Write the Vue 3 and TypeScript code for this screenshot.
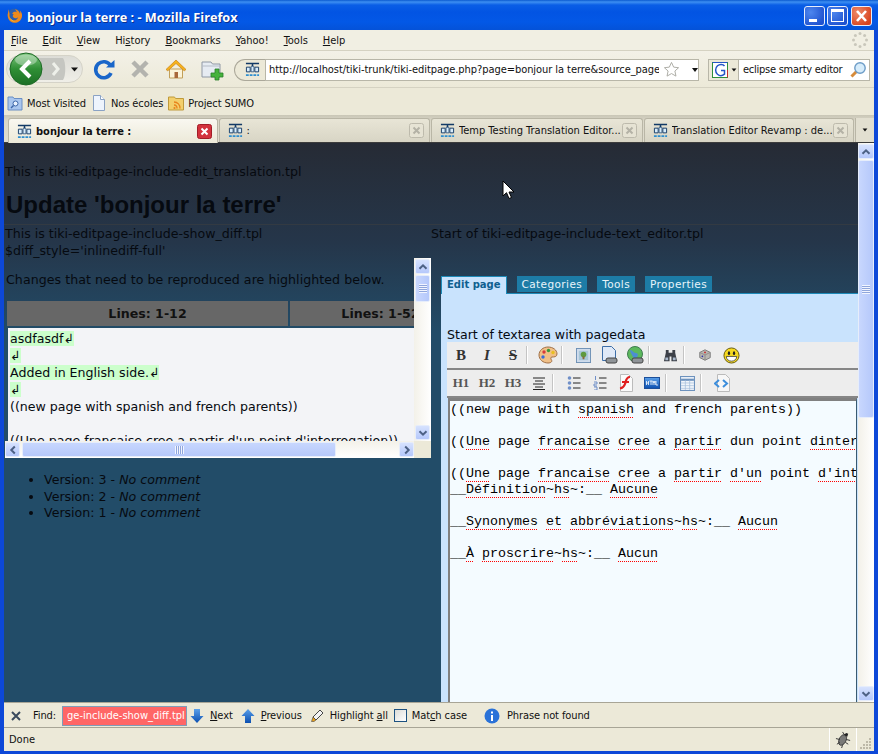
<script setup lang="ts">
const menu: [string, string, string][] = [
  ['', 'F', 'ile'], ['', 'E', 'dit'], ['', 'V', 'iew'], ['Hi', 's', 'tory'],
  ['', 'B', 'ookmarks'], ['', 'Y', 'ahoo!'], ['', 'T', 'ools'], ['', 'H', 'elp'],
]
const tabs = [
  { t: 'bonjour la terre :', on: true },
  { t: ':', on: false },
  { t: 'Temp Testing Translation Editor...', on: false },
  { t: 'Translation Editor Revamp : de...', on: false },
]
const diff = [
  { t: 'asdfasdf↲', add: true },
  { t: '↲', add: true },
  { t: 'Added in English side.↲', add: true },
  { t: '↲', add: true },
  { t: '((new page with spanish and french parents))', add: false },
  { t: '\u00a0', add: false },
  { t: "((Une page francaise cree a partir d'un point d'interrogation))", add: false },
]
const versions = ['3', '2', '1']
</script>

<template>
  <div class="win">
    <svg class="defs" aria-hidden="true">
      <defs>
        <linearGradient id="gg" x1="0" y1="0" x2="0" y2="1"><stop offset="0" stop-color="#7fc77f"/><stop offset=".5" stop-color="#2f8f35"/><stop offset="1" stop-color="#1c6f25"/></linearGradient>
        <linearGradient id="cap" x1="0" y1="0" x2="0" y2="1"><stop offset="0" stop-color="#dcdcd6"/><stop offset="1" stop-color="#f0efe8"/></linearGradient>
        <linearGradient id="bl" x1="0" y1="0" x2="0" y2="1"><stop offset="0" stop-color="#5aa0ea"/><stop offset="1" stop-color="#0b4fb0"/></linearGradient>
      </defs>
      <symbol id="tiki" viewBox="0 0 16 16">
        <path d="M1 1.500h14M8 1.500v9" stroke="#123a66" stroke-width="1.600" fill="none"/>
        <path d="M1.500 5.500h4v5h-4zM10.500 5.500h4v5h-4z" stroke="#123a66" fill="#d8ecfa"/>
        <path d="M6.500 4.500h3v6h-3z" fill="#d8ecfa" stroke="#123a66" stroke-width=".7"/>
        <path d="M1 13h3v2H1zM5 13h3v2H5zM9 13h3v2H9zM13 13h2v2h-2z" fill="#2e8fd0"/>
      </symbol>
      <symbol id="tx" viewBox="0 0 15 15">
        <rect x=".5" y=".5" width="14" height="14" rx="2" fill="#e6e3d4" stroke="#bdbaac"/>
        <path d="M4.500 4.500l6 6M10.500 4.500l-6 6" stroke="#b4b2a6" stroke-width="2"/>
      </symbol>
      <symbol id="ch" viewBox="0 0 10 10">
        <path d="M1.500 6.800L5 3.300l3.500 3.500" fill="none" stroke="#4d6185" stroke-width="2"/>
      </symbol>
    </svg>

    <header class="title">
      <svg class="ff" viewBox="0 0 18 18" width="17" height="17">
        <circle cx="9" cy="9" r="7.500" fill="#2b5fb0"/>
        <path d="M3 2.500c-.6 1.500-.5 2.500-.8 3.500C.8 10 3 16.500 9 16.800c4.500.2 8-3.500 8-7.800 0-2-.8-4-2.200-5.200.5 1.500.4 2.600 0 3.400C14 4.700 12 3 9.500 2.500c1 1 1.800 2 1.800 3-1-.6-2.500-.6-3.500 0-.9.600-1.400 1.500-1.200 1.800.8-.3 1.200.2 1.400.7-1 .9-1.200 2 0 3.200 1.300 1.200 4 .9 5-1-.5 2.700-3 4.300-5.500 3.800C4.500 13.300 3.200 10 3.800 7.500 3.400 6 3 4 3 2.500z" fill="#ee8a1c"/>
        <path d="M4 11c1 3 3.500 4.800 6.500 4.500C7.500 14.800 5.500 13.500 4 11z" fill="#f8cf3a"/>
      </svg>
      <span class="ttext">bonjour la terre : - Mozilla Firefox</span>
      <div class="wbtns">
        <div class="wb"><i class="imin"></i></div>
        <div class="wb"><i class="imax"></i></div>
        <div class="wb close">
          <svg viewBox="0 0 21 20" width="21" height="20"><path d="M6 5l9 10M15 5L6 15" stroke="#fff" stroke-width="2.600"/></svg>
        </div>
      </div>
    </header>

    <div class="chrome">
      <nav class="menu">
        <span v-for="m in menu" :key="m[1]" class="mi">{{ m[0] }}<u>{{ m[1] }}</u>{{ m[2] }}</span>
        <svg class="throb" viewBox="0 0 16 16" width="16" height="16">
          <g fill="#c9c7bb"><circle cx="8" cy="1.500" r="1.500"/><circle cx="12.600" cy="3.400" r="1.500"/><circle cx="14.500" cy="8" r="1.500"/><circle cx="12.600" cy="12.600" r="1.500"/><circle cx="8" cy="14.500" r="1.500"/><circle cx="3.400" cy="12.600" r="1.500"/><circle cx="1.500" cy="8" r="1.500"/><circle cx="3.400" cy="3.400" r="1.500"/></g>
        </svg>
      </nav>

      <div class="nav">
        <svg class="backfw" viewBox="0 0 78 34" width="78" height="34">
          <rect x=".5" y="3.500" width="76" height="27" rx="13.500" fill="url(#cap)" stroke="#d5d3c8"/>
          <path d="M30 6h27c3 4 3 18 0 22H30z" fill="#c5c6c1"/>
          <path d="M47 11l5 6-5 6" fill="none" stroke="#eef0ea" stroke-width="3"/>
          <path d="M65 15.500h7l-3.500 4z" fill="#111"/>
          <circle cx="20" cy="17" r="16" fill="url(#gg)" stroke="#1d6a25"/>
          <ellipse cx="20" cy="8" rx="11" ry="5.500" fill="#fff" opacity=".35"/>
          <path d="M24 9l-8 8 8 8" fill="none" stroke="#fff" stroke-width="4"/>
        </svg>
        <div class="nb"><svg viewBox="0 0 24 24" width="24" height="24"><path d="M18.500 8.500A8 8 0 1 0 19 16" fill="none" stroke="#1a66c9" stroke-width="3.600"/><path d="M14 10.500h8.500V3z" fill="#1a66c9"/></svg></div>
        <div class="nb"><svg viewBox="0 0 24 24" width="24" height="24"><path d="M5 5l14 14M19 5L5 19" stroke="#b3b3ae" stroke-width="4.500"/></svg></div>
        <div class="nb"><svg viewBox="0 0 24 24" width="24" height="24"><path d="M5.500 12v9h13v-9z" fill="#fbf3d8" stroke="#c2a05a"/><path d="M10.500 15h3.500v6h-3.500z" fill="#a9683a"/><path d="M2 12.500L12 3l10 9.500-1.800 1.300L12 6.500 3.800 13.800z" fill="#f6b21b" stroke="#c8831a" stroke-width=".7"/></svg></div>
        <div class="nb"><svg viewBox="0 0 24 24" width="24" height="24"><path d="M2 5h9l1.500 2H20v13H2z" fill="#e6ebf2" stroke="#8f98a4"/><path d="M2 9h18" stroke="#b5bcc6"/><path d="M15 12h4v4h4v4h-4v3h-4v-3h-4v-4h4z" fill="#46b23d" stroke="#2a7f28" stroke-width=".8"/></svg></div>

        <div class="url">
          <div class="ucap"><svg width="15" height="15"><use href="#tiki"/></svg></div>
          <div class="uin">
            <span class="utext">http://localhost/tiki-trunk/tiki-editpage.php?page=bonjour la terre&amp;source_page=</span>
            <svg viewBox="0 0 18 18" width="17" height="17"><path d="M9 1.500l2.300 5 5.200.6-3.900 3.500 1.100 5.400L9 13.300 4.300 16l1.100-5.400L1.500 7.100l5.200-.6z" fill="#fff" stroke="#a9a9a2"/></svg>
            <i class="tri urlt"></i>
          </div>
        </div>

        <div class="search">
          <div class="scap">
            <svg viewBox="0 0 16 16" width="16" height="16"><rect x=".5" y=".5" width="15" height="15" fill="#fff" stroke="#2f8f3a"/><path d="M.5.500h15" stroke="#2456c8"/><path d="M15.500 8v7.500" stroke="#c43030"/><path d="M12.500 4C11 2 7.500 2 5.500 3.800 3 6 3 10 5.500 12.300c2 1.700 5 1.500 7-.2V8.500H9" fill="none" stroke="#2456c8" stroke-width="1.500"/></svg>
            <i class="tri smt"></i>
          </div>
          <span class="stext">eclipse smarty editor</span>
          <svg class="smag" viewBox="0 0 18 18" width="18" height="18"><path d="M7.500 10.500l-5 5" stroke="#d68b3a" stroke-width="3"/><circle cx="11" cy="7" r="5.200" fill="#d6ecfb" stroke="#6c9cc7" stroke-width="1.400"/></svg>
        </div>
      </div>

      <div class="bm">
        <span class="bi">
          <svg viewBox="0 0 16 16" width="16" height="16"><path d="M1 2h5l1 1.500h8V15H1z" fill="#a9c6ee" stroke="#6a8fc4"/><circle cx="8.500" cy="8.500" r="2.500" fill="#e9f3ff" stroke="#3c66a8"/><path d="M6.500 10.500L4 13" stroke="#3c66a8" stroke-width="1.500"/></svg>Most Visited
        </span>
        <span class="bi">
          <svg viewBox="0 0 16 16" width="16" height="16"><path d="M2.500.500h7l4 4v11h-11z" fill="#eef4fd" stroke="#8aa2c4"/><path d="M9.500.500v4h4" fill="#fff" stroke="#8aa2c4"/></svg>Nos écoles
        </span>
        <span class="bi">
          <svg viewBox="0 0 16 16" width="16" height="16"><path d="M.5 2h6l1 1.500h8V15H.500z" fill="#f3cf6b" stroke="#bf9a3a"/><g fill="none" stroke="#e8841c" stroke-width="1.300"><path d="M6 7a6 6 0 0 1 6 6.500M6 10a3 3 0 0 1 3 3.500"/></g><circle cx="6.500" cy="13" r="1.100" fill="#e8841c"/></svg>Project SUMO
        </span>
      </div>

      <div class="tabs">
        <div v-for="(t, i) in tabs" :key="i" class="tab" :class="[{ on: t.on }, 'tw' + i]">
          <svg class="tico" width="15" height="15"><use href="#tiki"/></svg>
          <span class="tt">{{ t.t }}</span>
          <svg v-if="t.on" viewBox="0 0 15 15" width="15" height="15"><rect x=".5" y=".5" width="14" height="14" rx="2" fill="#d3323d" stroke="#a21d28"/><path d="M4.500 4.500l6 6M10.500 4.500l-6 6" stroke="#fff" stroke-width="2"/></svg>
          <svg v-else width="15" height="15"><use href="#tx"/></svg>
        </div>
        <div class="tabmore"><i class="tri"></i></div>
      </div>

      <div class="content">
        <main class="page">
          <p class="l1">This is tiki-editpage-include-edit_translation.tpl</p>
          <h1 class="h1">Update 'bonjour la terre'</h1>
          <div class="cols">
            <section class="left">
              <p class="ltop">This is tiki-editpage-include-show_diff.tpl</p>
              <p class="ltop2">$diff_style='inlinediff-full'</p>
              <div class="sbox">
                <div class="view">
                  <p class="chg">Changes that need to be reproduced are highlighted below.</p>
                  <div class="dhead"><div class="dh a">Lines: 1-12</div><div class="dh b">Lines: 1-52</div></div>
                  <div class="dbody">
                    <div v-for="(d, i) in diff" :key="i" class="dline"><span :class="{ add: d.add }">{{ d.t }}</span></div>
                  </div>
                </div>
                <div class="vbar small">
                  <div class="sb"><svg width="10" height="10"><use href="#ch"/></svg></div>
                  <div class="thumb tv"><i class="grip"></i></div>
                  <div class="track"></div>
                  <div class="sb"><svg class="flip" width="10" height="10"><use href="#ch"/></svg></div>
                </div>
                <div class="hbar">
                  <div class="sb"><svg class="rl" width="10" height="10"><use href="#ch"/></svg></div>
                  <div class="thumb th"><i class="griph"></i></div>
                  <div class="track"></div>
                  <div class="sb"><svg class="rr" width="10" height="10"><use href="#ch"/></svg></div>
                </div>
                <div class="corner"></div>
              </div>
              <ul class="vers">
                <li v-for="v in versions" :key="v">Version: {{ v }} - <em>No comment</em></li>
              </ul>
            </section>

            <section class="right">
              <p class="rtop">Start of tiki-editpage-include-text_editor.tpl</p>
              <div class="etabs">
                <span class="et on">Edit page</span>
                <span class="et">Categories</span>
                <span class="et">Tools</span>
                <span class="et">Properties</span>
              </div>
              <div class="panel">
                <p class="sta">Start of textarea with pagedata</p>
                <div class="bar bar1">
                  <span class="tb fx">B</span>
                  <span class="tb fx it">I</span>
                  <span class="tb fx st">S</span>
                  <i class="sep"></i>
                  <span class="tb"><svg viewBox="0 0 20 20" width="20" height="20"><path d="M10 2c5 0 9 3 9 7 0 3-3 3-5 3-1.500 0-1.500 2-.5 3 1 1.500-.5 3-3.500 3C5 18 1 14.500 1 10s4-8 9-8z" fill="#f0c088" stroke="#a07048"/><circle cx="6" cy="7" r="1.700" fill="#d83a3a"/><circle cx="10.500" cy="5.500" r="1.700" fill="#3a9a3a"/><circle cx="15" cy="7.500" r="1.700" fill="#e8c020"/><circle cx="5" cy="12" r="1.700" fill="#3a6ad8"/></svg></span>
                  <i class="sep"></i>
                  <span class="tb"><svg viewBox="0 0 16 16" width="15" height="15"><rect x=".5" y=".5" width="15" height="15" fill="#cfdcec" stroke="#6d8fb5"/><rect x="3" y="3" width="10" height="10" fill="#a7c6d8"/><circle cx="8" cy="7" r="3" fill="#5e9a3e"/><path d="M7 9h2v3H7z" fill="#8a6a3a"/></svg></span>
                  <span class="tb"><svg viewBox="0 0 18 18" width="18" height="18"><path d="M2.500.500h9l4 4v10h-13z" fill="#dfe9f7" stroke="#3d6ea8"/><rect x="6" y="12" width="11" height="5" rx="2" fill="#8f9498" stroke="#444"/></svg></span>
                  <span class="tb"><svg viewBox="0 0 18 18" width="18" height="18"><circle cx="9" cy="8" r="7.500" fill="#5cb85c" stroke="#3f7d4f"/><path d="M4 4c3 0 3 3 6 3s2 4 0 5-3-1-4-3-2-3-2-5z" fill="#4c8ed0"/><rect x="6" y="12" width="11" height="5" rx="2" fill="#8f9498" stroke="#444"/></svg></span>
                  <i class="sep"></i>
                  <span class="tb"><svg viewBox="0 0 16 16" width="15" height="15"><path d="M3 2h3v3h4V2h3v3l2 9H9V9H7v5H1l2-9z" fill="#3c4048"/><path d="M2.500 10h3v3h-3zM10.500 10h3v3h-3z" fill="#a9b8cc"/></svg></span>
                  <i class="sep"></i>
                  <span class="tb"><svg viewBox="0 0 16 16" width="14" height="14"><path d="M8 2l6 3v6l-6 3-6-3V5z" fill="#b9b7b2" stroke="#777"/><path d="M2 5l6 3 6-3M8 8v6" stroke="#8b8985" fill="none"/><circle cx="8" cy="5" r="1" fill="#c22"/><circle cx="5" cy="9.500" r="1" fill="#33a"/></svg></span>
                  <span class="tb"><svg viewBox="0 0 18 18" width="17" height="17"><circle cx="9" cy="9" r="8" fill="#f5d91e" stroke="#63560a"/><ellipse cx="6.300" cy="6.500" rx="1.200" ry="2" fill="#222"/><ellipse cx="11.700" cy="6.500" rx="1.200" ry="2" fill="#222"/><path d="M3.500 10h11c0 3-2.500 5-5.500 5s-5.500-2-5.500-5z" fill="#fff" stroke="#333" stroke-width=".8"/></svg></span>
                </div>
                <div class="bar bar2">
                  <span class="tb fx hh">H1</span>
                  <span class="tb fx hh">H2</span>
                  <span class="tb fx hh">H3</span>
                  <span class="tb"><svg viewBox="0 0 14 14" width="14" height="14"><path d="M1 2h12M3 5h8M1 8h12M3 11h8M1 13.500h12" stroke="#222" stroke-width="1"/></svg></span>
                  <i class="sep"></i>
                  <span class="tb"><svg viewBox="0 0 14 14" width="14" height="14"><path d="M6 2h7.500M6 7h7.500M6 12h7.500" stroke="#222"/><g fill="#6f8fc8"><circle cx="2.500" cy="2" r="1.800"/><circle cx="2.500" cy="7" r="1.800"/><circle cx="2.500" cy="12" r="1.800"/></g></svg></span>
                  <span class="tb"><svg viewBox="0 0 14 14" width="14" height="14"><path d="M6 2h7.500M6 7h7.500M6 12h7.500" stroke="#222"/><path d="M2.500 0v4M1 6h3v2H1v2h3M1 11h3v3H1" stroke="#6f8fc8" fill="none"/></svg></span>
                  <span class="tb"><svg viewBox="0 0 16 18" width="16" height="18"><path d="M2.500.500h8l4 4v13h-12z" fill="#fafafa" stroke="#bbb"/><path d="M12 3C8 3 8 7 7 10s-2 4-5 4.500M4 8h7" fill="none" stroke="#e02020" stroke-width="2.200"/></svg></span>
                  <span class="tb"><svg viewBox="0 0 16 12" width="16" height="12"><rect x=".5" y=".5" width="15" height="11" fill="url(#bl)" stroke="#1c4f9a"/><path d="M2.500 4v4M4.500 4v4M2.500 6h2M5.500 4h3M7 4v4M9 8V4l1 2 1-2v4M12 4v4h2" stroke="#fff" fill="none" stroke-width=".8"/></svg></span>
                  <i class="sep"></i>
                  <span class="tb"><svg viewBox="0 0 14 14" width="15" height="15"><rect x=".5" y=".5" width="13" height="13" fill="#f2f6fb" stroke="#6d92bd"/><path d="M1 3.500h12" stroke="#6d92bd" stroke-width="2"/><path d="M1 6.500h12M1 9h12M1 11.500h12M5 4v9M9 4v9" stroke="#a6bfdb" stroke-width=".7"/></svg></span>
                  <i class="sep"></i>
                  <span class="tb"><svg viewBox="0 0 16 18" width="16" height="18"><path d="M3.500.500h8l4 4v13h-12z" fill="#f7f7f7" stroke="#bbb"/><path d="M5 6L1 9.500 5 13M9 6l4 3.500L9 13" fill="none" stroke="#3d8edc" stroke-width="2"/></svg></span>
                </div>
                <div class="ta">
                  <div class="ln">((new page with <span class="sp">spanish</span> and french parents))</div>
                  <div class="ln"></div>
                  <div class="ln">((<span class="sp">Une</span> page <span class="sp">francaise</span> <span class="sp">cree</span> a <span class="sp">partir</span> dun point <span class="sp">dinterrogation</span>))</div>
                  <div class="ln"></div>
                  <div class="ln">((<span class="sp">Une</span> page <span class="sp">francaise</span> <span class="sp">cree</span> a <span class="sp">partir</span> <span class="sp">d'un</span> point <span class="sp">d'interrogation</span>))</div>
                  <div class="ln">__<span class="sp">Définition</span>~<span class="sp">hs</span>~:__ <span class="sp">Aucune</span></div>
                  <div class="ln"></div>
                  <div class="ln">__<span class="sp">Synonymes</span> <span class="sp">et</span> <span class="sp">abbréviations</span>~<span class="sp">hs</span>~:__ <span class="sp">Aucun</span></div>
                  <div class="ln"></div>
                  <div class="ln">__<span class="sp">À</span> <span class="sp">proscrire</span>~<span class="sp">hs</span>~:__ <span class="sp">Aucun</span></div>
                </div>
              </div>
            </section>
          </div>
          <svg class="cursor" viewBox="0 0 13 20" width="13" height="20"><path d="M1 1v15l3.500-3.300L7 18.500l2.500-1-2.500-5.500h5z" fill="#fff" stroke="#000"/></svg>
        </main>
        <div class="vbar big">
          <div class="sb"><svg width="10" height="10"><use href="#ch"/></svg></div>
          <div class="thumb tb2"><i class="grip"></i></div>
          <div class="track"></div>
          <div class="sb"><svg class="flip" width="10" height="10"><use href="#ch"/></svg></div>
        </div>
      </div>

      <div class="find">
        <svg class="fx-x" viewBox="0 0 10 10" width="10" height="10"><path d="M1 1l8 8M9 1L1 9" stroke="#3a4a5c" stroke-width="2"/></svg>
        <span class="flabel">Find:</span>
        <div class="finput">ge-include-show_diff.tpl</div>
        <span class="fi"><svg viewBox="0 0 14 16" width="14" height="16"><path d="M4 1h6v7h3.500L7 15 .5 8H4z" fill="url(#bl)"/></svg><span><u>N</u>ext</span></span>
        <span class="fi"><svg viewBox="0 0 14 16" width="14" height="16"><path d="M4 15h6V8h3.500L7 1 .5 8H4z" fill="url(#bl)"/></svg><span><u>P</u>revious</span></span>
        <span class="fi"><svg viewBox="0 0 14 14" width="14" height="14"><path d="M10 1l3 3-7 7-3-3z" fill="#f3f3f3" stroke="#444"/><path d="M3 8l3 3-2 1.500H1.500z" fill="#e8a01c" stroke="#444" stroke-width=".6"/></svg><span>Highlight <u>a</u>ll</span></span>
        <span class="fc"><i class="cb"></i><span>Mat<u>c</u>h case</span></span>
        <span class="fp"><svg viewBox="0 0 16 16" width="16" height="16"><circle cx="8" cy="8" r="7.500" fill="#2a72d8"/><path d="M7 3.500h2v2H7zM7 7h2v6H7z" fill="#fff"/></svg><span>Phrase not found</span></span>
      </div>

      <footer class="status">
        <span>Done</span>
        <div class="sright">
          <div class="bug"><svg viewBox="0 0 18 18" width="17" height="17"><path d="M6 6c2-3 5-2 6 0s-1 8-5 9-4-6-1-9z" fill="#7a7a78" stroke="#333"/><path d="M9 4l3-2 2 1-1 3z" fill="#222"/><path d="M5 9L1 8M5 12l-3 2M8 15l-1 3M12 9l4 1M11 12l3 2M10 4L8 1" stroke="#333"/></svg></div>
          <svg class="gripc" viewBox="0 0 12 12" width="12" height="12"><g fill="#bdb9a8"><rect x="9" y="1" width="2" height="2"/><rect x="6" y="4" width="2" height="2"/><rect x="9" y="4" width="2" height="2"/><rect x="3" y="7" width="2" height="2"/><rect x="6" y="7" width="2" height="2"/><rect x="9" y="7" width="2" height="2"/><rect x="0" y="10" width="2" height="2"/><rect x="3" y="10" width="2" height="2"/><rect x="6" y="10" width="2" height="2"/><rect x="9" y="10" width="2" height="2"/></g></svg>
        </div>
      </footer>
    </div>
  </div>
</template>

<style>
html, body { margin: 0; padding: 0; overflow: hidden; background: #0a3fd0; }
</style>

<style scoped>
p, h1, ul { margin: 0; padding: 0; }
.defs { width: 0; height: 0; display: block; overflow: hidden; }
.win {
  width: 878px; height: 754px; display: flex; flex-direction: column; overflow: hidden;
  background: #0d48d8; font-family: "DejaVu Sans Condensed", "DejaVu Sans", sans-serif; font-stretch: condensed; font-size: 11px; color: #111;
  position: relative;
}
.title {
  height: 30px; flex: none; display: flex; align-items: center; padding: 0 6px; box-sizing: border-box;
  background: linear-gradient(#0b5ad0 0, #3d8ff2 2px, #0a5ee6 5px, #0254e3 12px, #0358e6 22px, #0452d8 30px);
}
.ff { margin-top: 1px; }
.ttext { margin-left: 4px; margin-top: 3px; color: #fff; font-weight: 700; font-stretch: normal; font-size: 12.7px; font-family: "Open Sans", sans-serif; text-shadow: 1px 1px 0 #0a2f90; }
.wbtns { margin-left: auto; display: flex; gap: 2px; margin-top: 2px; }
.wb {
  width: 21px; height: 20px; box-sizing: border-box; border: 1px solid #e6edfb; border-radius: 3px;
  background: radial-gradient(circle at 30% 30%, #4d86ee, #1f52cf 80%); position: relative; overflow: hidden;
}
.wb.close { background: radial-gradient(circle at 30% 30%, #ee8a68, #d8431e 80%); margin-left: 1px; }
.wb.close svg { margin: -1px; display: block; }
.imin { position: absolute; left: 4px; bottom: 3px; width: 8px; height: 3px; background: #fff; }
.imax { position: absolute; left: 3px; top: 2px; width: 13px; height: 13px; box-sizing: border-box; border: 1px solid #fff; border-top-width: 3px; }
.chrome { flex: 1; min-height: 0; margin: 0 4px 3px; display: flex; flex-direction: column; background: #ece9d8; }
.menu { height: 21px; flex: none; display: flex; align-items: center; padding-left: 7px; gap: 15px; border-bottom: 1px solid #d5d2c2; box-sizing: border-box; background: #f1efe3; }
.mi { white-space: nowrap; }
.throb { margin-left: auto; margin-right: 6px; }
.nav { height: 37px; flex: none; display: flex; align-items: center; padding-left: 2px; border-bottom: 1px solid #d5d2c2; background: linear-gradient(#f3f1e7, #ece9d8); box-sizing: border-box; }
.nb { width: 36px; height: 24px; display: flex; justify-content: center; flex: none; }
.nb:first-of-type { margin-left: 2px; }
.url { margin: 1px 0 0 4px; width: 465px; height: 22px; display: flex; flex: none; }
.ucap { width: 31px; box-sizing: border-box; border: 1px solid #aba89a; border-right: none; border-radius: 11px 0 0 11px; background: #ece9d8; display: flex; align-items: center; justify-content: center; padding-left: 5px; }
.uin { flex: 1; min-width: 0; background: #fff; border: 1px solid #b8b6a8; display: flex; align-items: center; padding-left: 3px; box-sizing: border-box; }
.utext { width: 390px; overflow: hidden; white-space: nowrap; flex: none; margin-right: 4px; letter-spacing: -.06px; }
.tri { display: inline-block; width: 0; height: 0; border: 3.5px solid transparent; border-top: 4px solid #111; border-bottom: none; }
.urlt { margin-left: 12px; }
.search { margin: 1px 0 0 9px; width: 162px; height: 22px; display: flex; align-items: center; background: #fff; border: 1px solid #b8b6a8; box-sizing: border-box; flex: none; }
.scap { width: 30px; height: 100%; display: flex; align-items: center; gap: 3px; padding-left: 3px; box-sizing: border-box; background: #ece9d8; border-right: 1px solid #b8b6a8; flex: none; }
.smt { transform: scale(.8); }
.stext { margin-left: 4px; flex: 1; white-space: nowrap; letter-spacing: -.25px; }
.smag { margin-right: 2px; }
.bm { height: 27px; flex: none; display: flex; align-items: center; padding: 3px 0 0 3px; gap: 5px; background: #ece9d8; box-sizing: border-box; }
.bi { display: flex; align-items: center; gap: 4px; white-space: nowrap; letter-spacing: -.1px; }
.tabs { height: 28px; flex: none; box-sizing: border-box; display: flex; align-items: flex-start; gap: 1px; padding: 3px 0 0 4px; background: linear-gradient(#c9c6b6 0, #dad7c8 6px, #e0ddcf 100%); border-bottom: 1px solid #3c3c3c; }
.tab { height: 24px; box-sizing: border-box; display: flex; align-items: center; padding: 0 5px 0 8px; background: linear-gradient(#e8e5d6, #d8d5c5); border: 1px solid #b9b6a6; border-bottom: none; border-radius: 3px 3px 0 0; }
.tab.on { height: 25px; background: linear-gradient(#f9f8f1, #ece9d8); font-weight: 700; }
.tw0 { width: 210px; } .tw1 { width: 212px; } .tw2 { width: 212px; } .tw3 { width: 211px; }
.tico { flex: none; margin-right: 4px; }
.tt { flex: 1; white-space: nowrap; overflow: hidden; }
.tabmore { width: 18px; height: 24px; display: flex; align-items: center; justify-content: center; border-left: 1px solid #b9b6a6; background: #e2dfd0; }
.tabmore .tri { transform: scale(.8); }
.content { flex: none; height: 559px; display: flex; min-height: 0; }
.page {
  width: 854px; flex: none; overflow: hidden; position: relative;
  background: linear-gradient(#262b35 0, #25364a 100px, #224c68 190px, #224c68 100%);
  font-family: "DejaVu Sans", sans-serif; font-stretch: normal; font-size: 12.6px; color: #060a10;
}
.l1 { padding: 21px 0 0 1px; line-height: 16px; }
.h1 { font-family: "Liberation Sans", sans-serif; font-size: 24px; font-weight: 700; line-height: 28px; margin-top: 11px; padding: 0 0 5px 2px; border-bottom: 1px solid #333a42; }
.cols { display: grid; grid-template-columns: 427px 427px; }
.ltop { padding-left: 1px; line-height: 16px; margin-top: 1px; }
.ltop2 { padding-left: 1px; line-height: 15px; margin-top: 1px; }
.sbox { margin: 0 0 0 1px; width: 426px; height: 200px; display: grid; grid-template: 183px 17px / 409px 17px; }
.view { overflow: hidden; white-space: nowrap; padding-left: 2px; box-sizing: border-box; }
.chg { padding: 14px 0 0 0; line-height: 16px; margin-left: -1px; letter-spacing: .05px; }
.dhead { display: flex; gap: 2px; margin-top: 13px; height: 25px; }
.dh { background: #676767; font-weight: 700; text-align: center; line-height: 25px; color: #111; flex: none; }
.dh.a { width: 281px; } .dh.b { width: 181px; }
.dbody { margin: 2px 0 0 1px; background: #f3f4f7; padding: 2px 0 0 2px; height: 120px; box-sizing: border-box; }
.dline { line-height: 17px; height: 17px; }
.add { background: #ccffcc; }
.vers { list-style: disc; padding-left: 40px; margin-top: 14px; line-height: 16.5px; }
.rtop { line-height: 16px; margin-top: 1px; }
.etabs { margin: 34px 0 0 10px; height: 17px; display: flex; align-items: flex-start; gap: 10px; font-size: 10.5px; letter-spacing: .4px; }
.et { height: 16px; line-height: 16px; padding: 0 5px; background: #1d7ca6; color: #e8f4fa; }
.et.on { background: #c9e3fd; color: #0f6090; font-weight: 700; font-size: 10px; letter-spacing: 0; border: 1px solid #1d8ab8; border-bottom: none; height: 17px; padding: 0 5px; }
.panel { margin-left: 10px; width: 417px; height: 409px; background: #c9e3fd; border-top: 1px solid #1d8ab8; box-sizing: border-box; overflow: hidden; padding-left: 6px; }
.sta { padding-top: 33px; line-height: 15px; }
.bar { display: flex; align-items: center; height: 28px; background: #ededed; border-bottom: 2px solid #868686; padding-left: 1px; box-sizing: border-box; color: #222; }
.tb { width: 26px; height: 26px; display: flex; align-items: center; justify-content: center; flex: none; }
.fx { font-family: "Liberation Serif", serif; font-weight: 700; font-size: 15px; color: #333; }
.it { font-style: italic; }
.st { text-decoration: line-through; }
.hh { font-size: 13px; color: #555; }
.sep { height: 18px; margin-right: 7px; background: #c4c4c4; border-right: 1px solid #fff; flex: none; width: 1px; }
.ta { margin-left: 1px; height: 304px; padding-top: 1px; border: 2px solid #808080; border-top-width: 3px; border-right: 1px solid #3a5a70; border-bottom: none; background: #f4fbff; font-family: "Liberation Mono", monospace; font-size: 13.33px; line-height: 16px; color: #000; white-space: pre; overflow: hidden; box-sizing: border-box; width: 409px; }
.ln { height: 16px; }
.sp { padding-bottom: 1px; background: linear-gradient(90deg, #ff0000 50%, transparent 50%) left bottom / 2px 1px repeat-x; }
.cursor { position: absolute; left: 498px; top: 37px; }
.vbar { display: flex; flex-direction: column; align-items: stretch; background: linear-gradient(90deg, #f3f1e9, #fff); box-sizing: border-box; }
.vbar.small { width: 17px; padding: 1px; }
.vbar.big { width: 16px; padding: 1px 0; }
.hbar { display: flex; align-items: stretch; padding: 1px 0; height: 17px; box-sizing: border-box; background: linear-gradient(#f3f1e9, #fff); }
.sb { flex: none; width: 15px; height: 15px; box-sizing: border-box; border: 1px solid #e6edfb; border-radius: 2px; background: linear-gradient(#d6e2fe, #b5c8fb); display: flex; align-items: center; justify-content: center; }
.vbar .sb { width: 100%; }
.flip { transform: rotate(180deg); }
.rl { transform: rotate(-90deg); }
.rr { transform: rotate(90deg); }
.thumb { box-sizing: border-box; border: 1px solid #e6edfb; border-radius: 2px; flex: none; display: flex; align-items: center; justify-content: center; }
.vbar .thumb { background: linear-gradient(90deg, #c8d7fe, #b5c8fb); margin-top: 1px; }
.hbar .thumb { background: linear-gradient(#c8d7fe, #b5c8fb); margin-left: 2px; }
.tv { height: 27px; }
.th { width: 314px; }
.tb2 { height: 258px; }
.track { flex: 1; }
.grip { width: 8px; height: 9px; display: block; background: repeating-linear-gradient(#f2f5ff 0, #f2f5ff 1px, #8fa6dc 1px, #8fa6dc 2px); }
.griph { width: 9px; height: 8px; display: block; background: repeating-linear-gradient(90deg, #f2f5ff 0, #f2f5ff 1px, #8fa6dc 1px, #8fa6dc 2px); }
.corner { background: #ece9d8; }
.find { height: 26px; flex: none; box-sizing: border-box; padding: 1px 0 0 7px; border-top: 1px solid #a8a596; border-bottom: 1px solid #a8a596; display: flex; align-items: center; background: #ece9d8; letter-spacing: -.1px; }
.flabel { margin-left: 12px; }
.finput { margin-left: 6px; width: 125px; height: 20px; box-sizing: border-box; border: 1px solid #7f9db9; background: #ff6666; color: #fff; line-height: 18px; padding-left: 4px; white-space: nowrap; overflow: hidden; letter-spacing: 0; }
.fi { display: inline-flex; align-items: center; gap: 6px; margin-left: 3px; white-space: nowrap; }
.fi + .fi { margin-left: 8px; }
.fc { display: inline-flex; align-items: center; gap: 5px; margin-left: 6px; white-space: nowrap; }
.cb { width: 13px; height: 13px; box-sizing: border-box; border: 1px solid #1c5180; background: linear-gradient(135deg, #dcdcd7, #fff); }
.fp { display: inline-flex; align-items: center; gap: 7px; margin-left: 17px; white-space: nowrap; }
.status { height: 23px; flex: none; display: flex; align-items: center; padding-left: 5px; background: #ece9d8; }
.sright { margin-left: auto; display: flex; height: 100%; align-items: stretch; }
.bug { width: 26px; border-left: 1px solid #fff; border-right: 1px solid #fff; display: flex; align-items: center; justify-content: center; }
.gripc { align-self: flex-end; margin: 0 2px 2px 3px; }
</style>
